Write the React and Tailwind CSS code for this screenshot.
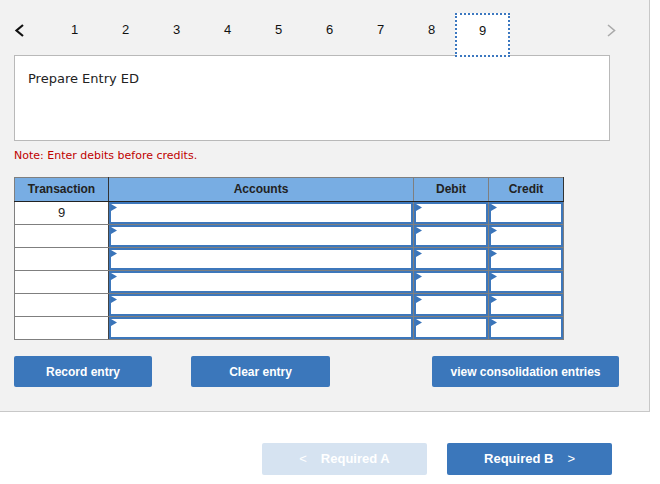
import React from 'react'

const tabs = [1, 2, 3, 4, 5, 6, 7, 8, 9]

const Arrow = () => (
  <svg className="absolute left-0 top-0" width="6" height="7" viewBox="0 0 6 7">
    <path d="M0 0 L6 3.5 L0 7 Z" fill="#3a74b9" />
  </svg>
)

const EntryCell = () => (
  <td className="border border-[#7f7f7f] p-0">
    <div className="relative h-[22px] border-2 border-[#3d77bb] bg-white">
      <Arrow />
    </div>
  </td>
)

const App = () => {
  const rows = ['9', '', '', '', '', '']

  return (
    <div className="w-[660px] h-[484px] bg-white font-['Liberation_Sans',Arial,sans-serif]">
      {/* Gray work panel */}
      <div className="w-[650px] bg-[#f2f2f2] border-r border-b border-[#c8c8c8] pb-[24px]">
        {/* Tab navigation */}
        <div className="relative flex h-[55px] items-start">
          <div className="w-[49px] pt-[24px] pl-[14px]">
            <svg width="11" height="13" viewBox="0 0 11 13">
              <path d="M9 1 L2.5 6.5 L9 12" stroke="#111" strokeWidth="2.2" fill="none" />
            </svg>
          </div>
          {tabs.map((t) =>
            t === 9 ? (
              <div
                key={t}
                className="relative z-10 mt-[13px] ml-[-2px] h-[44px] w-[55px] border-2 border-dotted border-[#3c78c0] bg-white pt-[7px] text-center text-[13px] leading-[18px] text-[#111]"
              >
                {t}
              </div>
            ) : (
              <div key={t} className="w-[51px] pt-[21px] text-center text-[13px] leading-[18px] text-[#111]">
                {t}
              </div>
            )
          )}
          <div className="absolute left-[606px] top-[24px]">
            <svg width="11" height="13" viewBox="0 0 11 13">
              <path d="M2 1 L8.5 6.5 L2 12" stroke="#aaaaaa" strokeWidth="1.6" fill="none" />
            </svg>
          </div>
        </div>

        {/* Instruction box */}
        <div className="ml-[14px] h-[86px] w-[596px] border border-[#b9b9b9] bg-white pl-[13px] pt-[14px]">
          <p className="font-['DejaVu_Sans',Verdana,sans-serif] text-[13px] leading-[18px] text-[#222]">
            Prepare Entry ED
          </p>
        </div>

        <p className="ml-[14px] mt-[7px] font-['DejaVu_Sans',Verdana,sans-serif] text-[11px] leading-[15px] text-[#c00000]">
          Note: Enter debits before credits.
        </p>

        {/* Journal table */}
        <table className="ml-[14px] mt-[14px] border-collapse">
          <thead>
            <tr className="h-[24px] bg-[#78ade3] text-[12px] font-bold text-[#222]">
              <th className="w-[94px] border border-[#7f7f7f] border-r-[#333] border-b-[#222] p-0 pb-[1px]">Transaction</th>
              <th className="w-[305px] border border-[#7f7f7f] border-b-[#222] p-0 pb-[1px]">Accounts</th>
              <th className="w-[75px] border border-[#7f7f7f] border-b-[#222] p-0 pb-[1px]">Debit</th>
              <th className="w-[75px] border border-[#7f7f7f] border-r-[#333] border-b-[#222] p-0 pb-[1px]">Credit</th>
            </tr>
          </thead>
          <tbody>
            {rows.map((r, i) => (
              <tr key={i} className="h-[23px]">
                <td className="border border-[#7f7f7f] border-r-[#444] bg-white p-0 text-center text-[13px] leading-[18px] text-[#222]">
                  {r}
                </td>
                <EntryCell />
                <EntryCell />
                <EntryCell />
              </tr>
            ))}
          </tbody>
        </table>

        {/* Action buttons */}
        <div className="mt-[16px] flex pl-[14px]">
          <button className="h-[31px] w-[138px] rounded-[2px] bg-[#3b77bb] text-[12px] font-bold text-white">
            Record entry
          </button>
          <button className="ml-[39px] h-[31px] w-[139px] rounded-[2px] bg-[#3b77bb] text-[12px] font-bold text-white">
            Clear entry
          </button>
          <button className="ml-[102px] h-[31px] w-[187px] rounded-[2px] bg-[#3b77bb] text-[12px] font-bold text-white">
            view consolidation entries
          </button>
        </div>
      </div>

      {/* Required navigation */}
      <div className="mt-[31px] flex pl-[262px]">
        <button className="flex h-[32px] w-[165px] items-center justify-center gap-[14px] rounded-[2px] bg-[#d6e3f1] text-[13px] font-bold text-white">
          <span className="font-normal">&lt;</span>
          <span>Required A</span>
        </button>
        <button className="ml-[20px] flex h-[32px] w-[165px] items-center justify-center gap-[14px] rounded-[2px] bg-[#3b77bb] text-[13px] font-bold text-white">
          <span>Required B</span>
          <span className="font-normal">&gt;</span>
        </button>
      </div>
    </div>
  )
}

export default App
